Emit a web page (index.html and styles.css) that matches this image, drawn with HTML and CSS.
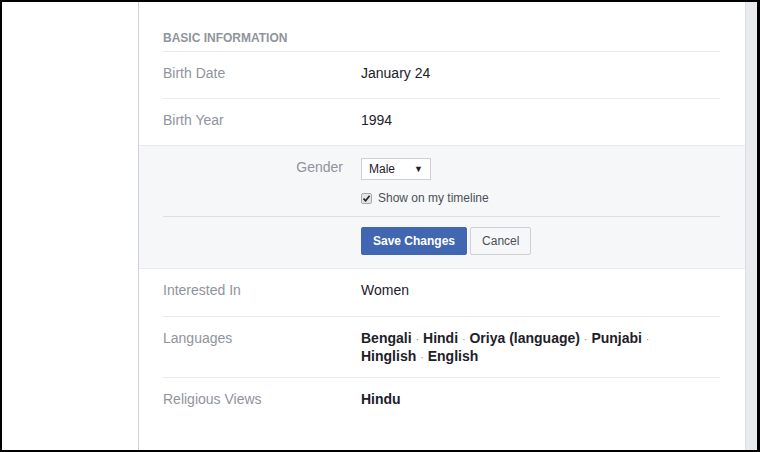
FILE: index.html
```html
<!DOCTYPE html>
<html lang="en">
<head>
<meta charset="UTF-8" />
<meta name="viewport" content="width=device-width, initial-scale=1" />
<title>About - Basic Information</title>
<link rel="stylesheet" href="styles.css">
</head>
<body>

<div class="frame">
  <div class="gutter"></div>

  <main class="about">
    <h3 class="heading">Basic Information</h3>

    <div class="row">
      <div class="label">Birth Date</div>
      <div class="value">January 24</div>
    </div>
    <div class="row">
      <div class="label">Birth Year</div>
      <div class="value">1994</div>
    </div>

    <form class="edit">
      <div class="edit-fields">
        <div class="edit-label">Gender</div>
        <div class="edit-controls">
          <div class="select">Male <span class="caret">▼</span></div>
          <label class="check">
            <span class="box">
              <svg width="9" height="9" viewBox="0 0 9 9"><path d="M1.5 4.6 L3.6 6.8 L7.6 1.8" fill="none" stroke="#222" stroke-width="1.6"/></svg>
            </span>
            Show on my timeline
          </label>
        </div>
      </div>
      <div class="edit-actions">
        <button type="button" class="btn btn-primary">Save Changes</button>
        <button type="button" class="btn">Cancel</button>
      </div>
    </form>

    <div class="row tall">
      <div class="label">Interested In</div>
      <div class="value">Women</div>
    </div>
    <div class="row">
      <div class="label">Languages</div>
      <div class="value strong">Bengali <span class="sep">·</span> Hindi <span class="sep">·</span> Oriya (language) <span class="sep">·</span> Punjabi <span class="sep">·</span> Hinglish <span class="sep">·</span> English</div>
    </div>
    <div class="row last">
      <div class="label">Religious Views</div>
      <div class="value strong">Hindu</div>
    </div>
  </main>

  <div class="scrollbar"></div>
</div>

</body>
</html>
```

FILE: styles.css
```css
* { box-sizing: border-box; }
body { margin: 0; font-family: "Liberation Sans", Arial, sans-serif; background: #fff; }

.frame { display: flex; width: 760px; height: 452px; border: solid #000; border-width: 2px 3px 2px 2px; background: #fff; overflow: hidden; }
.gutter { width: 136px; flex: none; }
.about { width: 607px; flex: none; border-left: 1px solid #cfd1d5; padding-top: 28px; }
.scrollbar { flex: 1; background: #e9ebee; border-left: 1px solid #dcdee2; }

.heading { margin: 0 25px 0 24px; padding-bottom: 5px; font-size: 12px; line-height: 16px; font-weight: bold; color: #90949c; text-transform: uppercase; border-bottom: 1px solid #e9ebee; }

.row { display: flex; margin: 0 25px 0 24px; padding: 12px 0; min-height: 47px; font-size: 14px; line-height: 18px; border-bottom: 1px solid #e9ebee; }
.row.tall { min-height: 48px; }
.row.last { border-bottom: none; }
.label { width: 198px; flex: none; color: #90949c; }
.value { width: 300px; color: #1d2129; }
.value.strong { font-weight: bold; }
.sep { font-weight: normal; font-size: 11px; line-height: 1; color: #90949c; }

.edit { background: #f6f7f9; padding: 12px 25px 13px 24px; border-bottom: 1px solid #e9ebee; margin-top: -1px; border-top: 1px solid #e9ebee; }
.edit-fields { display: flex; padding-bottom: 11px; border-bottom: 1px solid #dddfe2; }
.edit-label { width: 198px; flex: none; padding-right: 18px; text-align: right; font-size: 14px; line-height: 18px; color: #90949c; }
.edit-controls { display: flex; flex-direction: column; align-items: flex-start; }
.select { width: 70px; height: 22px; padding: 0 7px; display: flex; justify-content: space-between; align-items: center; background: #fff; border: 1px solid #ccd0d5; font-size: 12px; color: #1d2129; }
.caret { font-size: 9px; }
.check { display: flex; align-items: center; margin-top: 11px; font-size: 12px; line-height: 14px; color: #4b4f56; }
.box { width: 11px; height: 11px; margin-right: 6px; display: flex; align-items: center; justify-content: center; background: #e4e4e4; border: 1px solid #a9a9a9; border-radius: 2px; }

.edit-actions { display: flex; gap: 3px; margin-top: 10px; padding-left: 198px; }
.btn { height: 28px; padding: 0 11px; font-family: "Liberation Sans", Arial, sans-serif; font-size: 12px; color: #4b4f56; background: #f6f7f9; border: 1px solid #ced0d4; border-radius: 2px; }
.btn-primary { padding: 0 11px; font-weight: bold; color: #fff; background: #4267b2; border-color: #4267b2; }
```
